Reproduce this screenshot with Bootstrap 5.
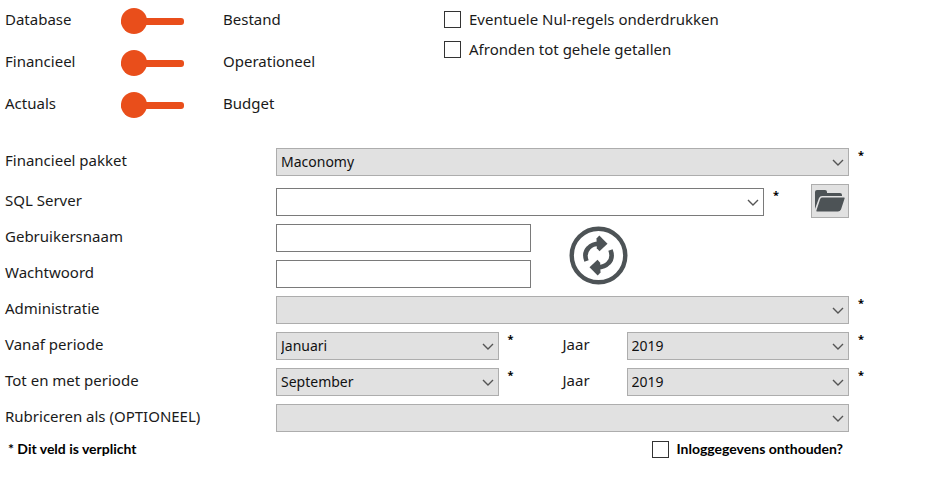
<!DOCTYPE html>
<html lang="nl">
<head>
<meta charset="utf-8">
<meta name="viewport" content="width=device-width, initial-scale=1">
<title>Financiële instellingen</title>
<link href="https://cdn.jsdelivr.net/npm/bootstrap@5.3.0/dist/css/bootstrap.min.css" rel="stylesheet">
<style>
  body { font-family: "Noto Sans", "Open Sans", sans-serif; font-size: 15px; line-height: 20px; color: #1a1a1a; background: #fff; }
  .settings { padding-left: 5px; }

  /* Toggle sliders */
  .toggle-row { height: 42px; padding-bottom: 4px; }
  .toggle-from { width: 116px; }
  .toggle-to { width: 260px; padding-left: 39px; }
  .toggle-slider { appearance: none; width: 63px; height: 26px; margin: 4px 0 0; background: transparent; }
  .toggle-slider::-webkit-slider-runnable-track { height: 7px; border-radius: 3px; background: #e94e1b; }
  .toggle-slider::-webkit-slider-thumb { appearance: none; width: 26px; height: 26px; margin-top: -10px; border-radius: 50%; background: #e94e1b; }
  .toggle-slider::-moz-range-track { height: 7px; border-radius: 3px; background: #e94e1b; }
  .toggle-slider::-moz-range-thumb { width: 26px; height: 26px; border: 0; border-radius: 50%; background: #e94e1b; }

  /* Tick boxes */
  .tick { width: 17px; height: 17px; margin: 0; flex: none; border: 1px solid #333; }
  .tick.form-check-input[type=checkbox] { border-radius: 0; }
  .tick-line { gap: 8px; }
  .tick-list { display: flex; flex-direction: column; gap: 10px; padding-top: 9px; }

  /* Fields */
  .field-list { padding-top: 22px; }
  .field-row { display: grid; grid-template-columns: 271px minmax(0, 1fr) 96px; margin-bottom: 8px; }
  .first-row { margin-bottom: 12px; }
  .field-row > label, .year-label { padding-top: 2px; }
  .box { height: 28px; padding: 0 4px; border: 1px solid #7a7a7a; border-radius: 0; font-size: 14px; line-height: 20px; color: #111; }
  .box.form-select { background-size: 12px 12px; background-position: right 4px center;
    --bs-form-select-bg-img: url("data:image/svg+xml,%3csvg xmlns='http://www.w3.org/2000/svg' viewBox='0 0 12 12'%3e%3cpath fill='none' stroke='%23555' stroke-width='1.4' d='M1 4l5 5 5-5'/%3e%3c/svg%3e"); }
  .box.grey-box { background-color: #e1e1e1; border-color: #adadad; }
  .required { padding-left: 9px; font-size: 11px; font-weight: 700; line-height: 14px; color: #000; }
  .mid-gap { width: 128px; flex: none; }
  .mid-gap .required { width: 64px; }
  .sql-gap { width: 47px; flex: none; }
  .browse { width: 38px; height: 34px; margin: -4px 0 -2px; flex: none; border: 1px solid #adadad; border-radius: 0; background: #e1e1e1; }
  .login-area { display: grid; grid-template-columns: 4fr 5fr; }
  .login-labels { gap: 8px; }
  .login-labels label { height: 28px; padding-top: 2px; }
  .refresh { margin-left: 38px; }
  .foot { font-family: Lato, "Noto Sans", sans-serif; font-size: 14px; font-weight: 700; line-height: 18px; color: #000; padding: 0 102px 0 3px; }
</style>
</head>
<body>
<form class="settings">
  <div class="d-flex">
    <div>
      <div class="toggle-row d-flex align-items-center">
        <label class="toggle-from" for="source">Database</label>
        <input class="toggle-slider" type="range" id="source" min="0" max="1" value="0">
        <span class="toggle-to">Bestand</span>
      </div>
      <div class="toggle-row d-flex align-items-center">
        <label class="toggle-from" for="kind">Financieel</label>
        <input class="toggle-slider" type="range" id="kind" min="0" max="1" value="0">
        <span class="toggle-to">Operationeel</span>
      </div>
      <div class="toggle-row d-flex align-items-center">
        <label class="toggle-from" for="figures">Actuals</label>
        <input class="toggle-slider" type="range" id="figures" min="0" max="1" value="0">
        <span class="toggle-to">Budget</span>
      </div>
    </div>
    <div class="tick-list">
      <div class="tick-line d-flex align-items-center">
        <input class="form-check-input tick" type="checkbox" id="zero">
        <label for="zero">Eventuele Nul-regels onderdrukken</label>
      </div>
      <div class="tick-line d-flex align-items-center">
        <input class="form-check-input tick" type="checkbox" id="round">
        <label for="round">Afronden tot gehele getallen</label>
      </div>
    </div>
  </div>

  <div class="field-list">
    <div class="field-row first-row">
      <label for="package">Financieel pakket</label>
      <select class="form-select box grey-box" id="package"><option>Maconomy</option></select>
      <span class="required">*</span>
    </div>
    <div class="field-row">
      <label for="server">SQL Server</label>
      <div class="d-flex">
        <select class="form-select box" id="server"><option></option></select>
        <span class="required sql-gap">*</span>
        <button class="btn browse p-0 d-flex align-items-center justify-content-center" type="button" aria-label="Bladeren">
          <svg width="30" height="24" viewBox="0 0 30 24" fill="#4d5356"><path d="M0 20V3Q0 1 2 1h8q2 0 2 2v1h13q2 0 2 2v1H7Q5 7 4 9z"/><path d="M7 8.500h22q1 0 .6 1L26 20.500q-1 2-3 2H2q-1 0-.6-1L5 10.500q.6-2 2-2z"/></svg>
        </button>
      </div>
    </div>
    <div class="field-row">
      <div class="login-labels d-flex flex-column">
        <label for="user">Gebruikersnaam</label>
        <label for="password">Wachtwoord</label>
      </div>
      <div class="login-area align-items-center">
        <div class="d-flex flex-column gap-2">
          <input class="form-control box" type="text" id="user">
          <input class="form-control box" type="password" id="password">
        </div>
        <div>
          <button class="btn refresh border-0 p-0 d-flex" type="button" aria-label="Vernieuwen">
            <svg width="60" height="60" viewBox="0 0 60 60"><defs><g id="turn"><path d="M17.500 35Q14.500 27 19.500 22Q23.500 17.600 31 17.800" fill="none" stroke="#4d5356" stroke-width="4.600"/><path d="M27.500 12.500L30.300 9.500L38.500 17.700L30.500 25.200L27.800 22.300z" fill="#4d5356"/></g></defs><circle cx="29.500" cy="29.500" r="26.800" fill="none" stroke="#4d5356" stroke-width="4.400"/><use href="#turn"/><use href="#turn" transform="rotate(180 29.500 29.500)"/></svg>
          </button>
        </div>
      </div>
    </div>
    <div class="field-row">
      <label for="administration">Administratie</label>
      <select class="form-select box grey-box" id="administration"><option></option></select>
      <span class="required">*</span>
    </div>
    <div class="field-row">
      <label for="from-month">Vanaf periode</label>
      <div class="d-flex">
        <select class="form-select box grey-box" id="from-month"><option>Januari</option></select>
        <div class="mid-gap d-flex"><span class="required">*</span><label class="year-label" for="from-year">Jaar</label></div>
        <select class="form-select box grey-box" id="from-year"><option>2019</option></select>
      </div>
      <span class="required">*</span>
    </div>
    <div class="field-row">
      <label for="to-month">Tot en met periode</label>
      <div class="d-flex">
        <select class="form-select box grey-box" id="to-month"><option>September</option></select>
        <div class="mid-gap d-flex"><span class="required">*</span><label class="year-label" for="to-year">Jaar</label></div>
        <select class="form-select box grey-box" id="to-year"><option>2019</option></select>
      </div>
      <span class="required">*</span>
    </div>
    <div class="field-row">
      <label for="category">Rubriceren als (OPTIONEEL)</label>
      <select class="form-select box grey-box" id="category"><option></option></select>
    </div>
  </div>

  <div class="foot d-flex justify-content-between align-items-center">
    <span>* Dit veld is verplicht</span>
    <div class="tick-line d-flex align-items-center">
      <input class="form-check-input tick" type="checkbox" id="remember">
      <label for="remember">Inloggegevens onthouden?</label>
    </div>
  </div>
</form>
<script src="https://cdn.jsdelivr.net/npm/bootstrap@5.3.0/dist/js/bootstrap.bundle.min.js"></script>
</body>
</html>
